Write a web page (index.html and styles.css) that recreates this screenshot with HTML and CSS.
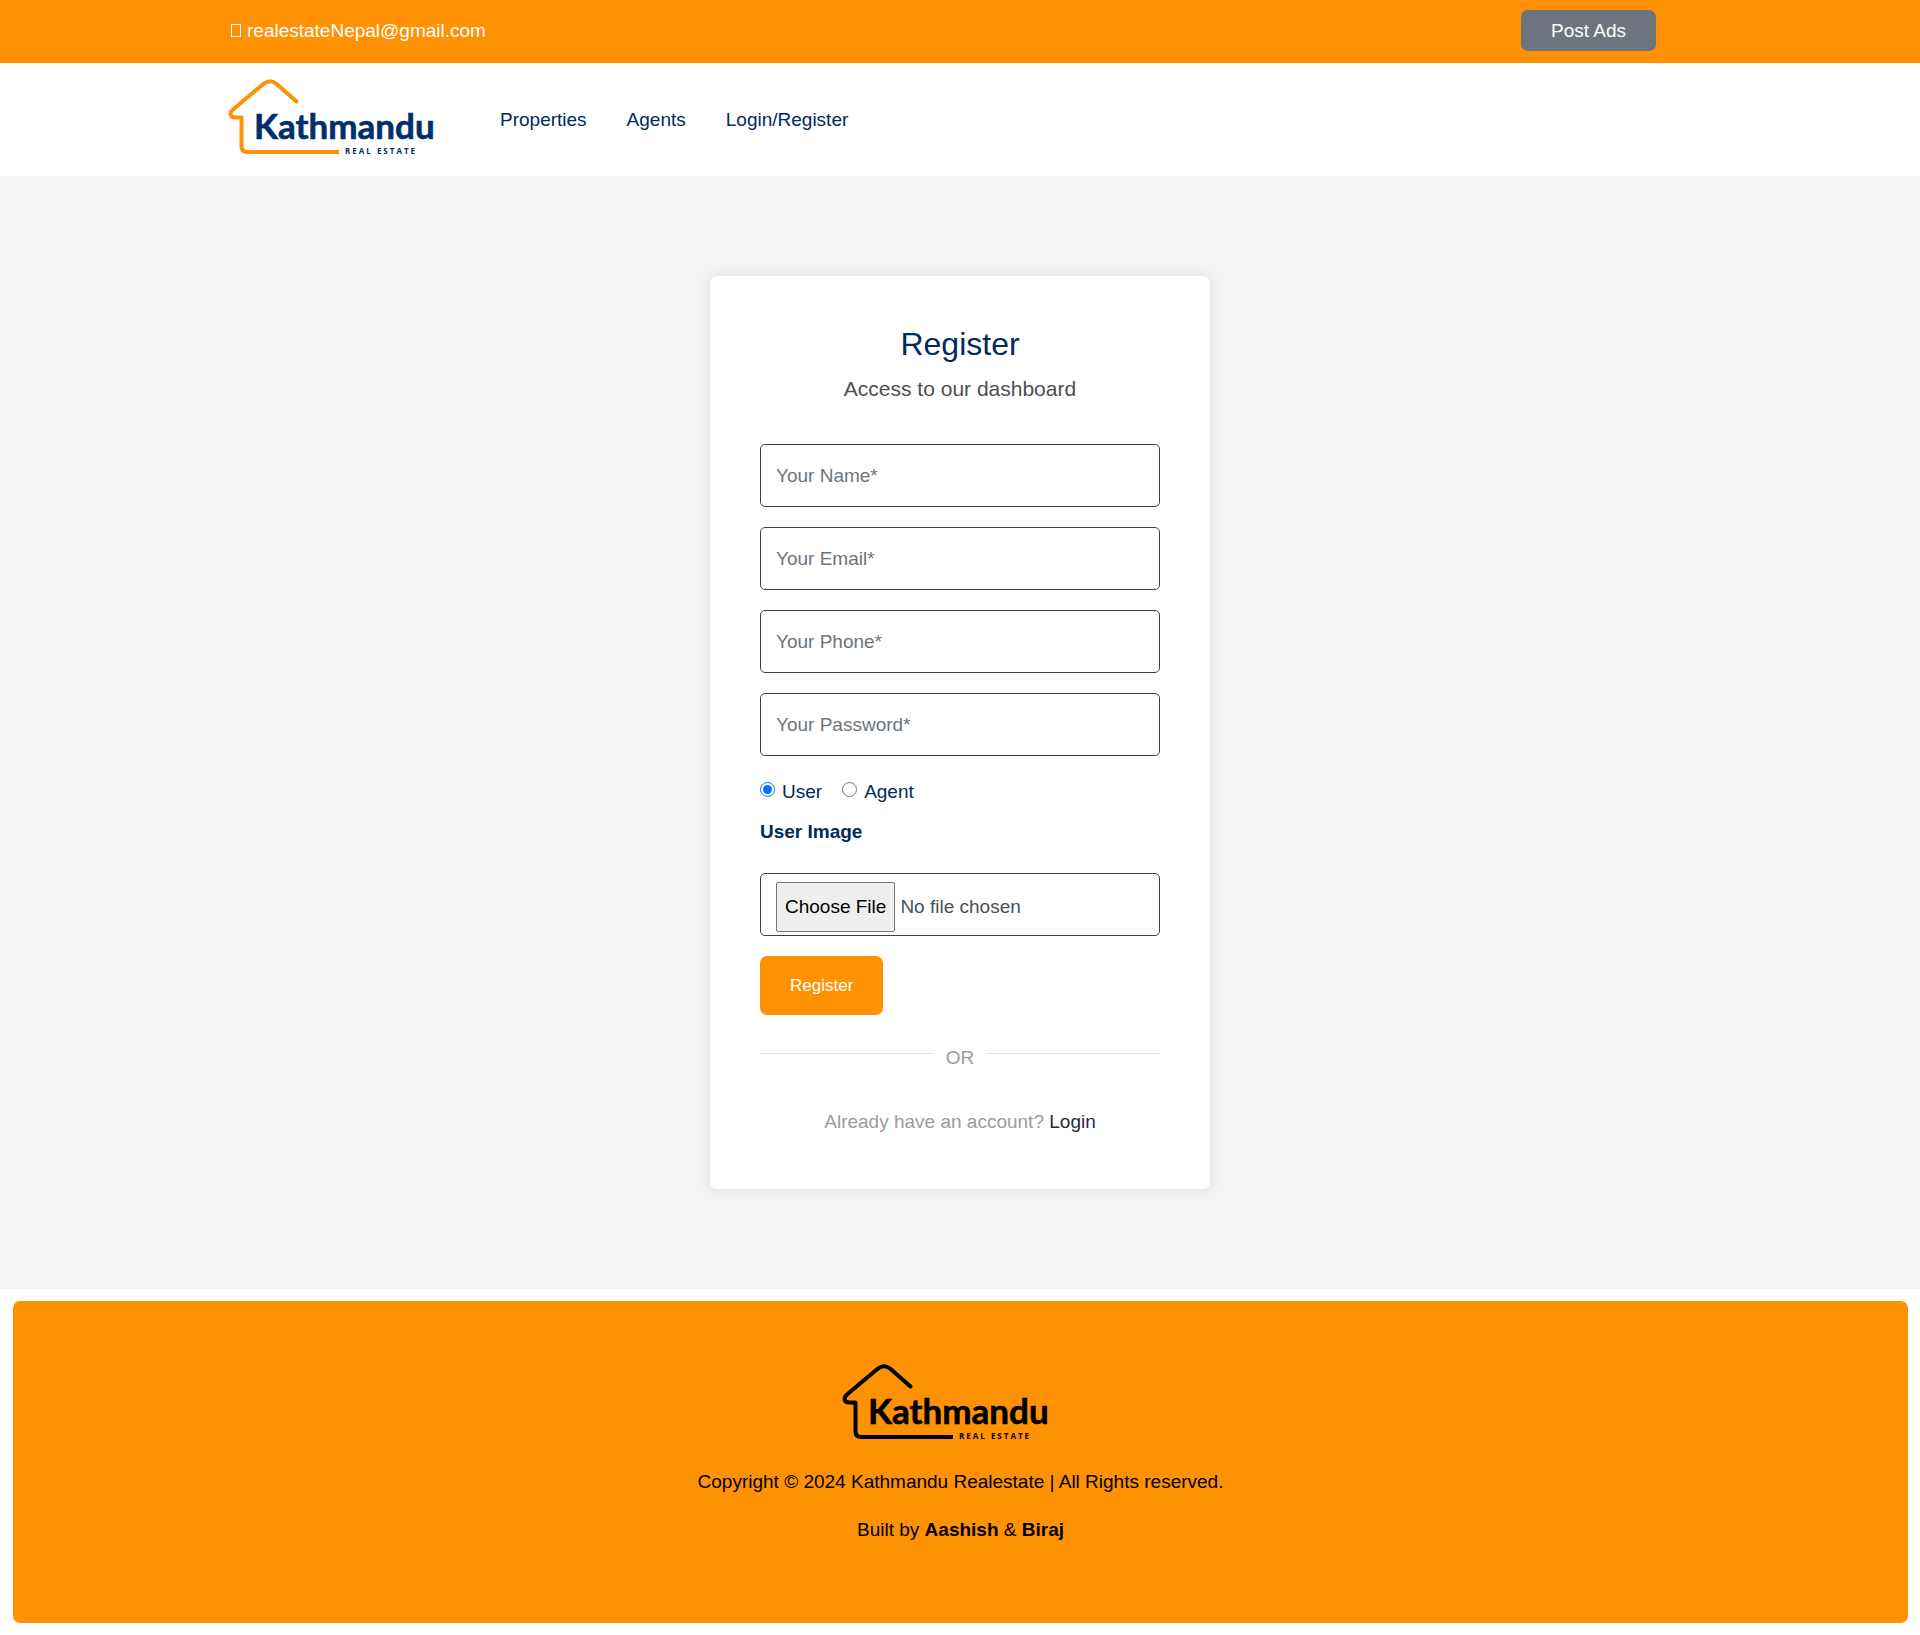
FILE: index.html
```html
<!DOCTYPE html>
<html lang="en">
<head>
<meta charset="utf-8">
<meta name="viewport" content="width=device-width, initial-scale=1">
<title>Register | Kathmandu Real Estate</title>
<link rel="stylesheet" href="styles.css">
</head>
<body>
<div class="topbar">
  <div class="container topbar-row">
    <a class="contact" href="mailto:realestateNepal@gmail.com"><span class="contact-icon"></span>realestateNepal@gmail.com</a>
    <button class="btn btn-post" type="button">Post Ads</button>
  </div>
</div>
<header class="header">
  <div class="container header-row">
    <a class="brand" href="#" aria-label="Kathmandu Real Estate">
      <svg class="logo" viewBox="4 0 234 83" width="234" height="83">
        <path class="logo-house" d="M70.5 23.5 L50 5.5 Q44 1 38 5.5 L7 31.5 C3 35 4 39.5 9 39.5 H15.5 V68 Q15.5 74 21 74 H113"/>
        <path class="logo-cap" d="M70.5 23.5 h0"/>
        <text class="logo-name" x="28" y="61">Kathmandu</text>
        <text class="logo-tag" x="119" y="76">REAL ESTATE</text>
      </svg>
    </a>
    <nav class="nav">
      <a href="#">Properties</a>
      <a href="#">Agents</a>
      <a href="#">Login/Register</a>
    </nav>
  </div>
</header>
<main class="page">
  <section class="card">
    <h1 class="title">Register</h1>
    <p class="subtitle">Access to our dashboard</p>
    <form class="form">
      <input class="field" type="text" placeholder="Your Name*" aria-label="Your Name">
      <input class="field" type="email" placeholder="Your Email*" aria-label="Your Email">
      <input class="field" type="text" placeholder="Your Phone*" aria-label="Your Phone">
      <input class="field" type="password" placeholder="Your Password*" aria-label="Your Password">
      <div class="roles">
        <label class="role"><input type="radio" name="role" checked><span>User</span></label>
        <label class="role"><input type="radio" name="role"><span>Agent</span></label>
      </div>
      <label class="file-label" for="photo">User Image</label>
      <input class="field field-file" id="photo" type="file">
      <button class="btn btn-register" type="submit">Register</button>
    </form>
    <div class="divider"><span>OR</span></div>
    <p class="signin">Already have an account? <a href="#">Login</a></p>
  </section>
</main>
<footer class="footer">
  <svg class="logo logo-dark" viewBox="4 0 234 83" width="234" height="83" role="img" aria-label="Kathmandu Real Estate">
    <path class="logo-house" d="M70.5 23.5 L50 5.5 Q44 1 38 5.5 L7 31.5 C3 35 4 39.5 9 39.5 H15.5 V68 Q15.5 74 21 74 H113"/>
    <path class="logo-cap" d="M70.5 23.5 h0"/>
    <text class="logo-name" x="28" y="61">Kathmandu</text>
    <text class="logo-tag" x="119" y="76">REAL ESTATE</text>
  </svg>
  <p>Copyright © 2024 Kathmandu Realestate | All Rights reserved.</p>
  <p>Built by <b>Aashish</b> &amp; <b>Biraj</b></p>
</footer>
</body>
</html>
```

FILE: styles.css
```css
* { box-sizing: border-box; }

body {
  margin: 0;
  background: #fff;
  color: #002b5c;
  font: 19px/24px "Liberation Sans", Arial, sans-serif;
}

a { color: inherit; text-decoration: none; }
h1, p { margin: 0; }

.container {
  max-width: 1460px;
  margin: 0 auto;
}

.btn {
  border: 0;
  border-radius: 7px;
  color: #fff;
  font-family: inherit;
  cursor: pointer;
}

/* Top bar */
.topbar { background: #ff9204; }
.topbar-row {
  display: flex;
  justify-content: space-between;
  align-items: flex-start;
  padding: 10px 34px 12px 0;
}
.contact {
  display: flex;
  align-items: center;
  gap: 6px;
  height: 41px;
  color: #fff;
}
.contact-icon {
  width: 10px;
  height: 13px;
  margin-left: 1px;
  border: 1px solid #fff;
}
.btn-post {
  height: 41px;
  padding: 0 30px;
  background: #6c757d;
  font-size: 19px;
}

/* Header */
.header-row {
  display: flex;
  align-items: center;
  padding: 15px 0;
}
.brand { display: flex; }
.nav {
  display: flex;
  gap: 40px;
  padding-left: 36px;
}

.logo { display: block; overflow: visible; color: #002f6c; }
.logo-house { fill: none; stroke: #ff9204; stroke-width: 4; stroke-linejoin: round; }
.logo-cap { fill: none; stroke: #ff9204; stroke-width: 4; stroke-linecap: round; }
.logo-name { fill: currentColor; stroke: currentColor; stroke-width: .6; font: 700 35px Lato, sans-serif; }
.logo-tag { fill: currentColor; font: 700 8px "Open Sans", sans-serif; letter-spacing: 2px; }
.logo-dark { color: #000; }
.logo-dark .logo-house, .logo-dark .logo-cap { stroke: #000; }

/* Register card */
.page {
  padding: 100px 16px;
  background: #f4f4f4;
}
.card {
  max-width: 500px;
  margin: 0 auto;
  padding: 50px 50px 55px;
  border-radius: 7px;
  background: #fff;
  box-shadow: 0 0 13px rgba(0, 0, 0, .1);
}
.title {
  margin-bottom: 12px;
  font-size: 32px;
  font-weight: 400;
  line-height: 36px;
  text-align: center;
}
.subtitle {
  margin-bottom: 40px;
  color: #4f4f4f;
  font-size: 21px;
  line-height: 30px;
  text-align: center;
}
.form {
  display: flex;
  flex-direction: column;
  align-items: flex-start;
}
.field {
  width: 100%;
  height: 63px;
  margin-bottom: 20px;
  padding: 6px 15px;
  border: 1px solid #463b40;
  border-radius: 5px;
  background: #fff;
  color: #495057;
  font: inherit;
}
.field::placeholder { color: #6c757d; opacity: 1; }
.roles {
  display: flex;
  gap: 20px;
  margin: 4px 0 16px;
}
.role {
  display: flex;
  align-items: flex-start;
  gap: 7px;
}
.role input {
  width: 15px;
  height: 15px;
  margin: 2px 0 0;
  accent-color: #0075ff;
}
.file-label {
  margin-bottom: 29px;
  font-weight: 700;
}
.field-file { padding: 8px 15px; }
.field-file::file-selector-button {
  height: 50px;
  margin-right: 5px;
  padding: 0 8px;
  border: 1px solid #767676;
  border-radius: 2px;
  background: #efefef;
  color: #000;
  font: inherit;
}
.btn-register {
  height: 59px;
  padding: 0 30px;
  background: #ff9204;
  font-size: 17px;
}
.divider {
  display: flex;
  align-items: flex-start;
  gap: 12px;
  margin: 31px 0 40px;
  color: #9b9b9b;
}
.divider::before, .divider::after {
  content: "";
  flex: 1;
  height: 1px;
  margin-top: 7px;
  background: #e2e2e2;
}
.signin {
  color: #9b9b9b;
  text-align: center;
}
.signin a { color: #272b41; }

/* Footer */
.footer {
  display: flex;
  flex-direction: column;
  align-items: center;
  gap: 24px;
  margin: 12px 12px 12px 13px;
  padding: 62px 16px 81px;
  border-radius: 7px;
  background: #ff9204;
  color: #000;
}
```
